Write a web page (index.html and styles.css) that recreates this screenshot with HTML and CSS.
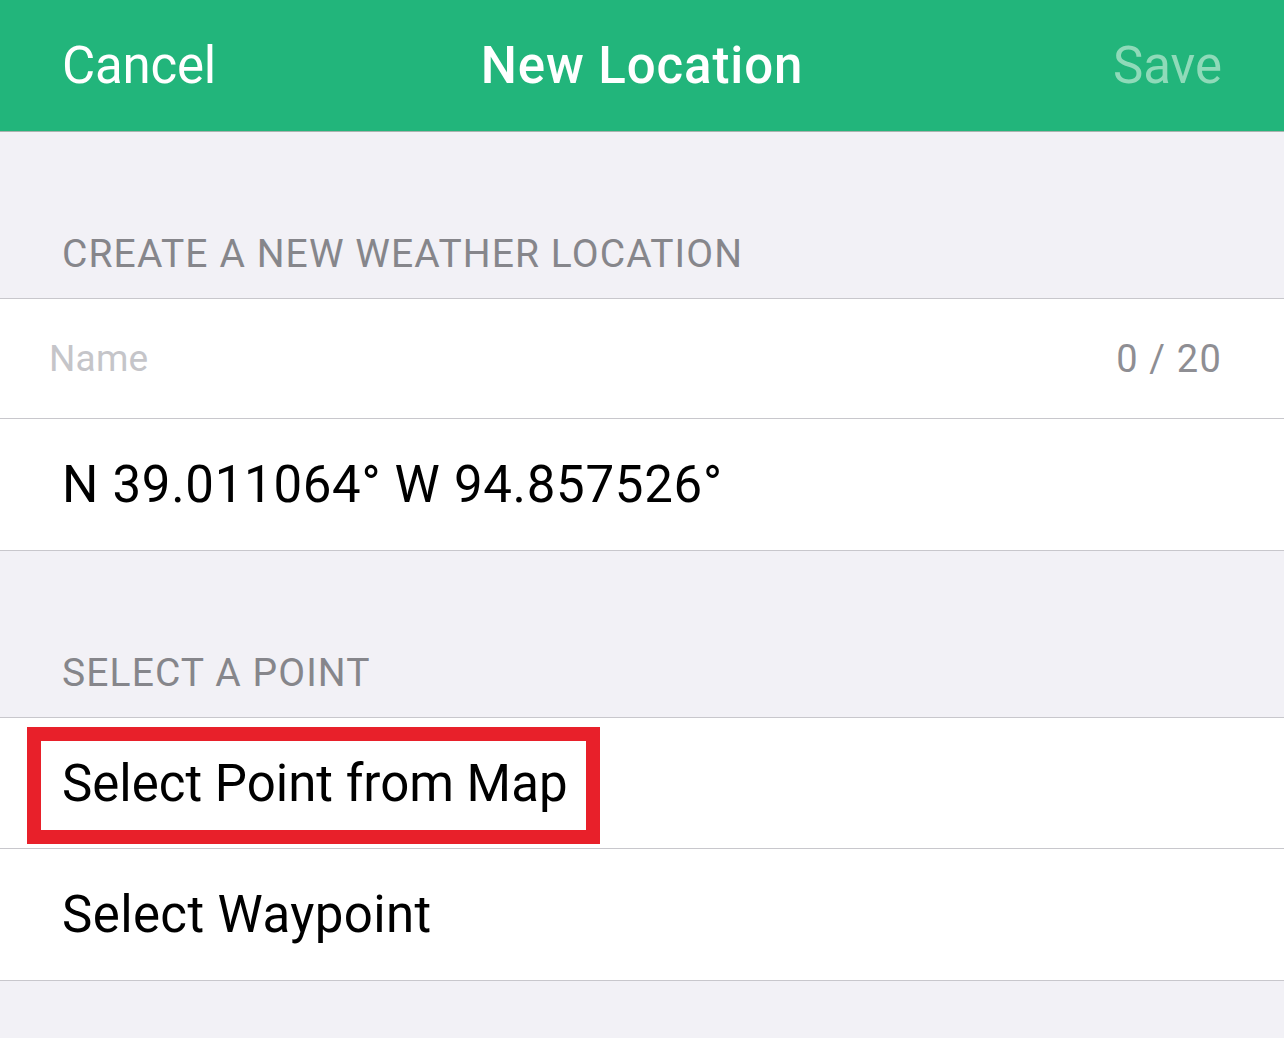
FILE: index.html
```html
<!DOCTYPE html>
<html lang="en">
<head>
    <meta charset="UTF-8">
    <meta name="viewport" content="width=device-width, initial-scale=1.0">
    <title>New Location</title>
    <link rel="stylesheet" href="styles.css">
</head>
<body>
    <header class="nav-bar">
        <span class="nav-cancel">Cancel</span>
        <h1 class="nav-title">New Location</h1>
        <span class="nav-save">Save</span>
    </header>

    <div class="section-header">CREATE A NEW WEATHER LOCATION</div>
    <div class="group">
        <div class="row row-name">
            <span class="placeholder">Name</span>
            <span class="counter">0 / 20</span>
        </div>
        <div class="row row-coords">N 39.011064° W 94.857526°</div>
    </div>

    <div class="section-header">SELECT A POINT</div>
    <div class="group">
        <div class="row row-marked">
            Select Point from Map
            <span class="highlight"></span>
        </div>
        <div class="row">Select Waypoint</div>
    </div>
</body>
</html>
```

FILE: styles.css
```css
/* General styles */
body {
    margin: 0;
    padding: 0;
    background-color: #f2f1f6;
    font-family: Roboto, "Liberation Sans", sans-serif;
    color: #000;
}

/* Navigation bar */
.nav-bar {
    display: grid;
    grid-template-columns: 1fr auto 1fr;
    align-items: center;
    height: 131px;
    padding: 0 62px;
    background-color: #22b57b;
    border-bottom: 1px solid #a9b3ae;
    font-size: 51px;
}

.nav-cancel {
    color: #fff;
    justify-self: start;
    letter-spacing: -0.2px;
}

.nav-title {
    margin: 0;
    font-size: 51px;
    font-weight: 500;
    color: #fff;
    letter-spacing: 0.9px;
}

.nav-save {
    color: #8fdab9;
    justify-self: end;
}

/* Section headers */
.section-header {
    display: flex;
    align-items: flex-end;
    height: 166px;
    padding: 0 62px 21px;
    box-sizing: border-box;
    font-size: 39px;
    color: #86868b;
    letter-spacing: 1.1px;
}

/* Grouped rows */
.group {
    background: #fff;
    border-top: 1px solid #c8c7cc;
}

.row {
    position: relative;
    display: flex;
    align-items: center;
    height: 131px;
    padding: 0 62px;
    border-bottom: 1px solid #c8c7cc;
    font-size: 51px;
    letter-spacing: 0.4px;
}

.row-name {
    height: 119px;
    padding-left: 49px;
    justify-content: space-between;
    font-size: 37px;
    letter-spacing: 0.2px;
}

.row-coords {
    letter-spacing: 0.7px;
}

.row-marked {
    height: 130px;
    letter-spacing: 0;
}

.placeholder {
    color: #c5c5c9;
}

.counter {
    color: #8e8e93;
    font-size: 38px;
    letter-spacing: 1.2px;
}

/* Red annotation box */
.highlight {
    position: absolute;
    left: 27px;
    top: 9px;
    width: 573px;
    height: 117px;
    border: 14px solid #e8202a;
    box-sizing: border-box;
}
```
